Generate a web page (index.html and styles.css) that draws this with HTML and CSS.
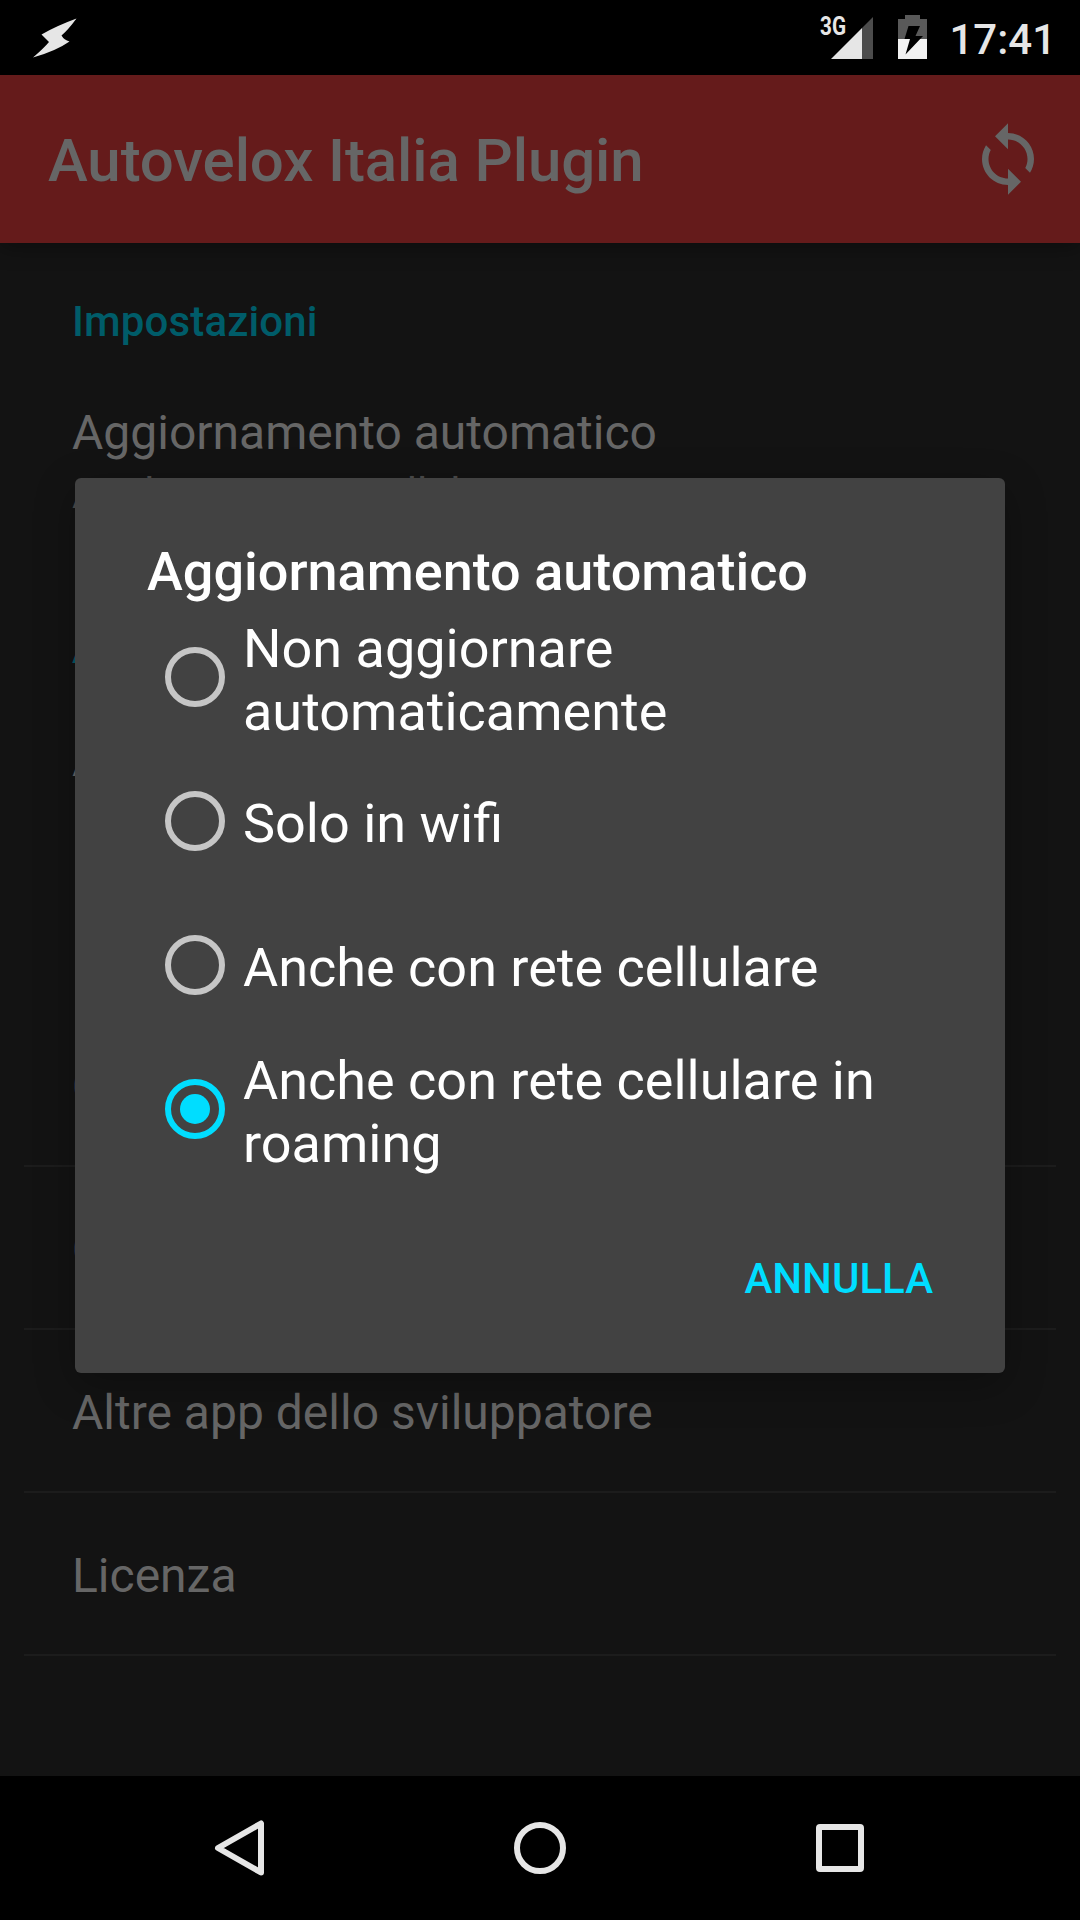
FILE: index.html
```html
<!DOCTYPE html>
<html lang="it">
<head>
<meta charset="utf-8">
<title>Autovelox Italia Plugin</title>
<link rel="stylesheet" href="styles.css">
</head>
<body>
<div class="screen">
  <header class="status">
    <svg class="status-bolt" width="48" height="44" viewBox="0 0 48 44"><path d="M44.500 2.500Q36 14 29.500 19.500Q32 24 37.500 25.500Q24 35 1 41.500Q12 32 17 26Q13 22 9.500 18.500Q24 10 44.500 2.500Z" fill="#e6e6e6"/></svg>
    <div class="status-right">
      <svg width="54" height="48" viewBox="0 0 54 48">
        <path d="M43 16L54 5V47H43Z" fill="#4c4c4c"/>
        <path d="M12 47L43 16V47Z" fill="#e6e6e6"/>
        <text class="network" x="1" y="23" textLength="26" lengthAdjust="spacingAndGlyphs">3G</text>
      </svg>
      <svg class="battery" width="29" height="44" viewBox="0 0 29 44">
        <path d="M7 0H22V4H29V24H0V4H7Z" fill="#595959"/>
        <path d="M0 24H29V44H0Z" fill="#f2f2f2"/>
        <path d="M10.500 11H22L17.500 21H25L7.500 39.500 12 24H6.500Z" fill="#000"/>
      </svg>
      <span class="clock">17:41</span>
    </div>
  </header>
  <div class="appbar">
    <h1>Autovelox Italia Plugin</h1>
    <svg width="78" height="78" viewBox="0 0 24 24" fill="#666"><path d="M12 4V1L8 5l4 4V6c3.310 0 6 2.690 6 6 0 1.010-.25 1.970-.7 2.800l1.460 1.460C19.540 15.030 20 13.570 20 12c0-4.420-3.580-8-8-8zm0 14c-3.310 0-6-2.690-6-6 0-1.010.25-1.970.7-2.800L5.240 7.740C4.460 8.970 4 10.430 4 12c0 4.420 3.580 8 8 8v3l4-4-4-4v3z"/></svg>
  </div>
  <main class="prefs">
    <h2 class="category">Impostazioni</h2>
    <div class="pref">
      <div>Aggiornamento automatico</div>
      <div class="summary">Anche con rete cellulare in roaming</div>
    </div>
    <h2 class="category second">A</h2>
    <div class="pref tall">A</div>
    <div class="row">C</div>
    <div class="row">C</div>
    <div class="row">Altre app dello sviluppatore</div>
    <div class="row">Licenza</div>
  </main>
  <nav class="navbar">
    <svg width="60" height="60" viewBox="0 0 60 60"><path d="M51 5.500V54.500L8 30Z"/></svg>
    <svg width="60" height="60" viewBox="0 0 60 60"><circle cx="30" cy="30" r="23"/></svg>
    <svg width="60" height="60" viewBox="0 0 60 60"><rect x="9" y="9" width="42" height="42" rx="1"/></svg>
  </nav>
  <div class="overlay">
    <section class="dialog">
      <h3>Aggiornamento automatico</h3>
      <div class="option"><span class="radio"></span><span class="label">Non aggiornare automaticamente</span></div>
      <div class="option"><span class="radio"></span><span class="label">Solo in wifi</span></div>
      <div class="option"><span class="radio"></span><span class="label">Anche con rete cellulare</span></div>
      <div class="option"><span class="radio checked"></span><span class="label">Anche con rete cellulare in roaming</span></div>
      <div class="actions"><span>ANNULLA</span></div>
    </section>
  </div>
</div>
</body>
</html>
```
FILE: styles.css
```css
* { box-sizing: border-box; }
body { margin: 0; background: #000; font-family: Roboto, sans-serif; }
h1, h2, h3 { margin: 0; font-weight: 500; }
svg { display: block; flex: none; }

.screen {
  position: relative;
  width: 1080px;
  height: 1920px;
  overflow: hidden;
  display: flex;
  flex-direction: column;
  background: #131313;
}

.status {
  height: 75px;
  background: #000;
  display: flex;
  justify-content: space-between;
  padding: 0 24px 0 32px;
}
.status-bolt { margin-top: 16px; }
.status-right { display: flex; align-items: flex-start; }
.status-right > svg:first-child { margin-top: 12px; }
.network { font: 700 25px Roboto, sans-serif; fill: #e6e6e6; }
.battery { margin: 15px 0 0 25px; }
.clock {
  margin: 15px 0 0 22px;
  font-size: 42px;
  line-height: 50px;
  font-weight: 500;
  color: #e6e6e6;
}

.appbar {
  height: 168px;
  background: #651b1b;
  color: #666;
  display: flex;
  align-items: center;
  justify-content: space-between;
  padding: 0 33px 0 48px;
  box-shadow: 0 4px 20px rgba(0, 0, 0, .35);
}
.appbar h1 {
  font-size: 60px;
  line-height: 70px;
  padding-top: 4px;
  letter-spacing: -.1px;
}

.prefs {
  flex: 1;
  padding: 54px 24px 0;
  font-size: 48px;
  line-height: 56px;
  color: #666;
}
.category {
  padding: 0 48px;
  font-size: 42px;
  line-height: 50px;
  letter-spacing: .15px;
  color: #005c69;
}
.pref { padding: 58px 48px 0; }
.summary {
  font-size: 42px;
  line-height: 49px;
  margin-top: 8px;
  color: #4c4c4c;
  white-space: nowrap;
}
.second { padding-top: 106px; }
.tall { height: 330px; }
.row {
  height: 163px;
  padding: 4px 48px 0;
  display: flex;
  align-items: center;
  border-bottom: 2px solid #1c1c1c;
}

.navbar {
  height: 144px;
  background: #000;
  display: flex;
  justify-content: center;
  align-items: center;
  gap: 240px;
}
.navbar svg {
  fill: none;
  stroke: #e6e6e6;
  stroke-width: 6;
  stroke-linejoin: round;
}

.overlay {
  position: absolute;
  inset: 75px 0 144px;
  display: flex;
  align-items: center;
  justify-content: center;
}
.dialog {
  width: 930px;
  height: 895px;
  padding: 61px 72px 53px;
  border-radius: 6px;
  background: #424242;
  color: #fff;
  display: flex;
  flex-direction: column;
  box-shadow: 0 12px 40px rgba(0, 0, 0, .28);
}
.dialog h3 { font-size: 54px; line-height: 65px; margin-bottom: 1px; }
.option {
  height: 144px;
  padding-left: 18px;
  display: flex;
  align-items: center;
  gap: 18px;
}
.radio {
  flex: none;
  width: 60px;
  height: 60px;
  border: 6px solid #c6c6c6;
  border-radius: 50%;
  display: grid;
  place-items: center;
}
.radio.checked { border-color: #00ddff; }
.radio.checked::after {
  content: "";
  width: 30px;
  height: 30px;
  border-radius: 50%;
  background: #00ddff;
}
.label {
  width: 660px;
  padding-top: 5px;
  font-size: 54px;
  line-height: 63px;
}
.actions {
  margin-top: 73px;
  display: flex;
  justify-content: flex-end;
  font-size: 42px;
  line-height: 50px;
  font-weight: 500;
  color: #00ddff;
}
```
